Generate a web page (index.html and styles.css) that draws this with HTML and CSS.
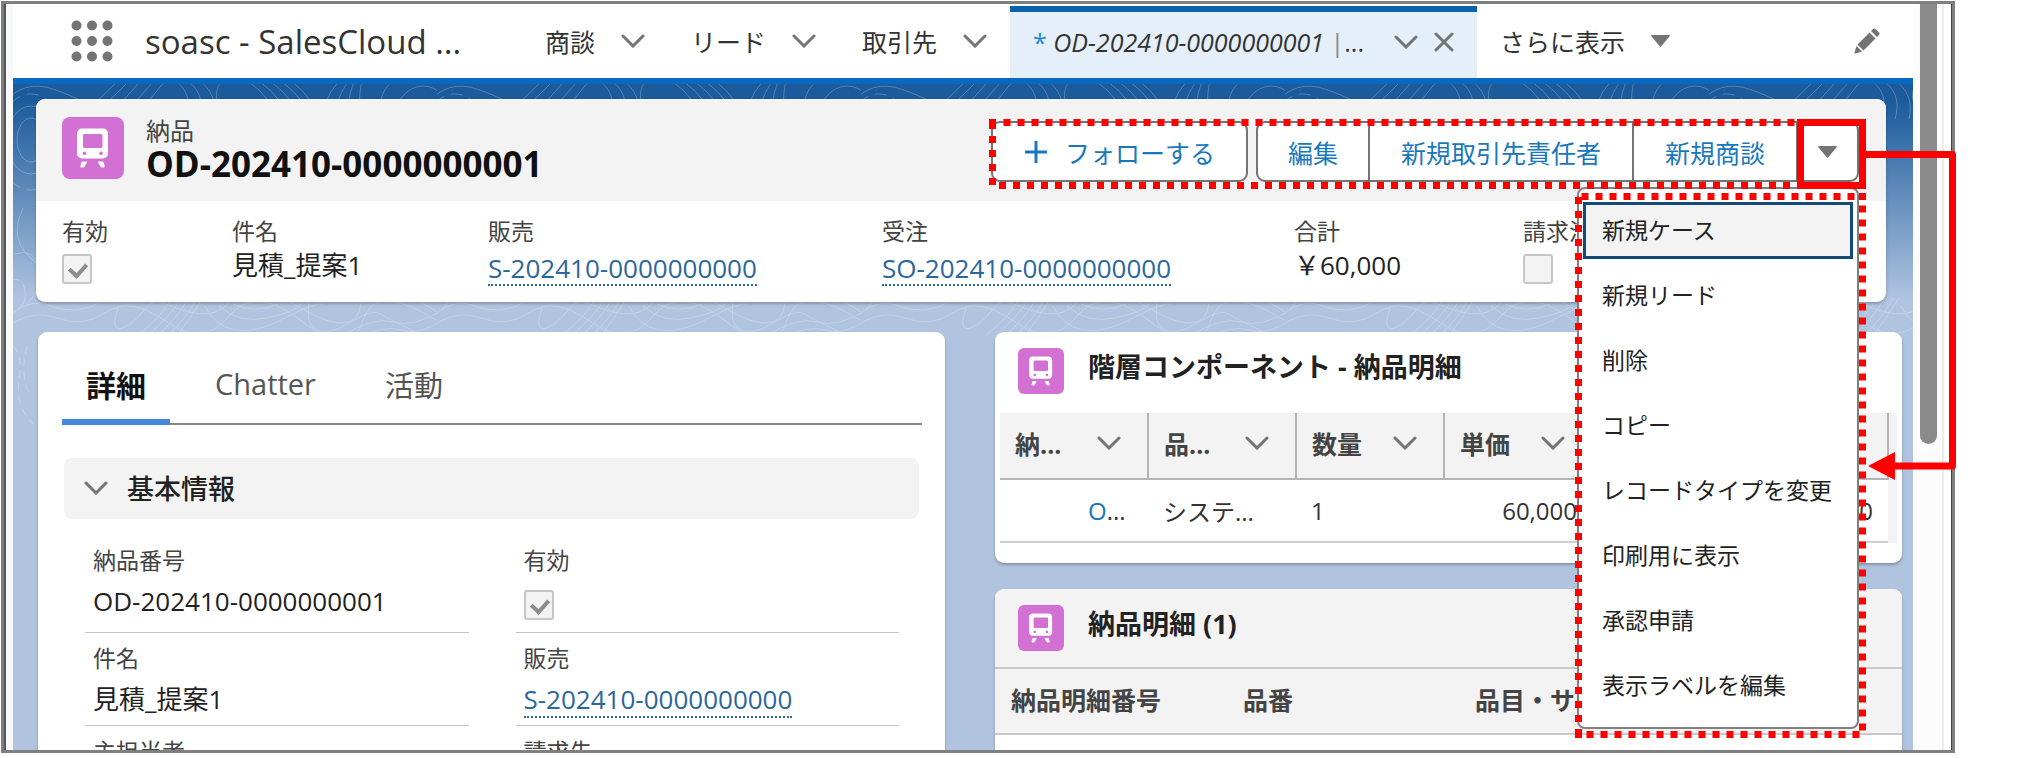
FILE: index.html
```html
<!DOCTYPE html>
<html lang="ja">
<head>
<meta charset="utf-8">
<title>OD-202410-0000000001 | 納品</title>
<link rel="stylesheet" href="styles.css">
</head>
<body>
<svg class="defs" width="0" height="0" aria-hidden="true">
  <symbol id="train" viewBox="0 0 62 62">
    <path fill="#fff" fill-rule="evenodd" d="M20 11.500h21a5 5 0 0 1 5 5v20a5 5 0 0 1-5 5H20a5 5 0 0 1-5-5v-20a5 5 0 0 1 5-5zM22.500 17a1.500 1.500 0 0 0-1.500 1.500v11a1.500 1.500 0 0 0 1.500 1.500h16.500a1.500 1.500 0 0 0 1.500-1.500v-11a1.500 1.500 0 0 0-1.500-1.500zM22.500 34.500a1.800 1.800 0 1 0 .01 0zM39 34.500a1.800 1.800 0 1 0 .01 0z"/>
    <path fill="#fff" d="M20.500 44.500h4q1 0 .5 1l-2.500 4q-.5 1-1.500 1h-1.500q-1.500 0-1.200-1.500l1-3.500q.2-1 1.200-1zM40.500 44.500h-4q-1 0-.5 1l2.500 4q.5 1 1.500 1h1.500q1.500 0 1.200-1.500l-1-3.500q-.2-1-1.200-1z"/>
  </symbol>
  <symbol id="chevron" viewBox="0 0 24 14">
    <path d="M2 2l10 10L22 2" fill="none" stroke="#747474" stroke-width="3" stroke-linecap="round"/>
  </symbol>
  <symbol id="triangle" viewBox="0 0 19 12">
    <path d="M1 0h17q1.500 0 .6 1.200L10.300 11.200q-.8 1-1.600 0L.4 1.200Q-.5 0 1 0z" fill="#747474"/>
  </symbol>
</svg>

<div class="frame">
  <div class="gutter-left"></div>
  <div class="app">
    <header class="nav">
      <button class="launcher" aria-label="アプリケーションランチャー">
        <svg width="42" height="42" viewBox="0 0 42 42" fill="#747474"><circle cx="5.500" cy="5.500" r="5"/><circle cx="21" cy="5.500" r="5"/><circle cx="36.500" cy="5.500" r="5"/><circle cx="5.500" cy="21" r="5"/><circle cx="21" cy="21" r="5"/><circle cx="36.500" cy="21" r="5"/><circle cx="5.500" cy="36.500" r="5"/><circle cx="21" cy="36.500" r="5"/><circle cx="36.500" cy="36.500" r="5"/></svg>
      </button>
      <span class="app-name">soasc - SalesCloud ...</span>
      <nav class="items">
        <div class="item"><a href="#">商談</a><button aria-label="商談リスト"><svg class="chev"><use href="#chevron"/></svg></button></div>
        <div class="item"><a href="#">リード</a><button aria-label="リードリスト"><svg class="chev"><use href="#chevron"/></svg></button></div>
        <div class="item"><a href="#">取引先</a><button aria-label="取引先リスト"><svg class="chev"><use href="#chevron"/></svg></button></div>
        <div class="item current">
          <a href="#"><span class="star">*</span> <em>OD-202410-0000000001</em> <span class="bar">|</span>...</a>
          <button aria-label="タブの操作"><svg class="chev"><use href="#chevron"/></svg></button>
          <button class="close" aria-label="閉じる"><svg width="20" height="20" viewBox="0 0 20 20"><path d="M2 2l16 16M18 2L2 18" stroke="#747474" stroke-width="3" stroke-linecap="round"/></svg></button>
        </div>
        <button class="item more">さらに表示 <svg class="tri"><use href="#triangle"/></svg></button>
      </nav>
      <button class="edit-nav" aria-label="ナビゲーションを編集">
        <svg width="26" height="26" viewBox="0 0 26 26" fill="#747474"><path d="M3.500 16.500L15.500 4.500l6 6L9.500 22.500zM17 3l2-2q1.200-1 2.400 0L25 4.600q1.200 1.200 0 2.400l-2 2zM2.500 18l5.500 5.500-6.500 2Q.2 25.800.5 24.500z"/></svg>
      </button>
    </header>

    <main class="page">
      <svg class="topo" aria-hidden="true">
        <defs>
          <pattern id="contours" width="424" height="360" patternUnits="userSpaceOnUse">
            <g fill="none" stroke="#fff" stroke-width="1">
              <path d="M-10 20Q10-5 40 5t60 30"/><path d="M75 26L110-8M87 26L121-8M100 28L132-8M112 30L145-8M125 30L156-8"/>
              <path d="M160-5q22 14 12 40M172-5q22 14 14 40M184-5q22 14 16 40M210-5q-14 16 2 40"/>
              <path d="M225-8q24 10 40 40M236-8q24 10 40 40M247-8q24 10 40 40M258-8q24 10 40 40M269-8q22 10 38 40"/>
              <path d="M310 30q4-24 22-38M322 30q4-24 18-38M334 30q2-24 10-38M346 30q0-24 4-38M372 30q-12-20 14-38"/>
              <ellipse cx="18" cy="56" rx="14" ry="22"/><ellipse cx="18" cy="56" rx="24" ry="34"/><ellipse cx="18" cy="58" rx="34" ry="48" stroke-dasharray="12 7"/>
              <ellipse cx="408" cy="40" rx="18" ry="24"/><ellipse cx="410" cy="40" rx="30" ry="38"/>
              <path d="M10 124q-14 30 6 48t20 30M2 170q18-6 24 12t-10 36M-4 196q14-4 16 10t-8 20"/>
              <ellipse cx="406" cy="160" rx="14" ry="16"/><ellipse cx="406" cy="160" rx="24" ry="28"/><ellipse cx="406" cy="162" rx="36" ry="42"/>
              <path d="M-10 238q24-26 48-16t50-4 70 4 60-6 70 8 60-4 80 10"/>
              <path d="M-10 246q28-22 54-12t50-6 60 10 62-6 74 6 60-2 80 4"/>
              <path d="M105 224q-8 24 4 20t22-18 28-8M124 252q30-24 34-38M134 252q24-20 34-38M144 252q20-18 32-38M154 252q18-16 30-38M164 252q12-16 26-38"/>
              <path d="M192 222q10 20 30 24t50-12 38-14M206 222q20 18 48 12t34-14M220 220q22 10 46 0"/>
              <path d="M296 218q-4 22 8 28t34-8 30-8 40 20M330 252q30-20 50-14t50-12M344 256q26-16 44-10t42-10"/>
              <path d="M0 262q10 8 6 34t14 44M340 262q20 40 30 50M356 256q8 26 20 34M14 262q-8 30 4 50" stroke-dasharray="8 5"/>
            </g>
          </pattern>
        </defs>
        <rect width="100%" height="100%" fill="url(#contours)"/>
      </svg>

      <section class="card highlights">
        <div class="head">
          <span class="obj-icon"><svg><use href="#train"/></svg></span>
          <div class="titles">
            <p>納品</p>
            <h1>OD-202410-0000000001</h1>
          </div>
          <div class="actions">
            <button class="btn follow"><svg width="24" height="24" viewBox="0 0 24 24"><path d="M12 1v22M1 12h22" stroke="#1878bd" stroke-width="3"/></svg>フォローする</button>
            <div class="group">
              <button class="btn">編集</button>
              <button class="btn">新規取引先責任者</button>
              <button class="btn">新規商談</button>
              <button class="btn open" aria-label="その他のアクション" aria-expanded="true"><svg class="tri"><use href="#triangle"/></svg></button>
              <ul class="menu">
                <li><a href="#" class="focus">新規ケース</a></li>
                <li><a href="#">新規リード</a></li>
                <li><a href="#">削除</a></li>
                <li><a href="#">コピー</a></li>
                <li><a href="#">レコードタイプを変更</a></li>
                <li><a href="#">印刷用に表示</a></li>
                <li><a href="#">承認申請</a></li>
                <li><a href="#">表示ラベルを編集</a></li>
              </ul>
            </div>
          </div>
        </div>
        <div class="summary">
          <div><label class="label" for="h-active">有効</label><div class="value tick"><input type="checkbox" id="h-active" checked disabled></div></div>
          <div><span class="label">件名</span><div class="value">見積_提案1</div></div>
          <div><span class="label">販売</span><div class="value link"><a href="#">S-202410-0000000000</a></div></div>
          <div><span class="label">受注</span><div class="value link"><a href="#">SO-202410-0000000000</a></div></div>
          <div><span class="label">合計</span><div class="value">￥60,000</div></div>
          <div><label class="label" for="h-billed">請求済</label><div class="value tick"><input type="checkbox" id="h-billed" disabled></div></div>
        </div>
      </section>

      <div class="columns">
        <section class="card detail">
          <div class="tabs" role="tablist">
            <button role="tab" aria-selected="true" class="on">詳細</button>
            <button role="tab">Chatter</button>
            <button role="tab">活動</button>
          </div>
          <button class="section"><svg class="chev"><use href="#chevron"/></svg>基本情報</button>
          <div class="fields">
            <div><span class="label">納品番号</span><div class="value">OD-202410-0000000001</div></div>
            <div><label class="label" for="d-active">有効</label><div class="value tick"><input type="checkbox" id="d-active" checked disabled></div></div>
            <div><span class="label">件名</span><div class="value">見積_提案1</div></div>
            <div><span class="label">販売</span><div class="value"><a href="#">S-202410-0000000000</a></div></div>
            <div><span class="label">主担当者</span></div>
            <div><span class="label">請求先</span></div>
          </div>
        </section>

        <div class="related">
          <section class="card">
            <div class="card-head"><span class="obj-icon small"><svg><use href="#train"/></svg></span><h2>階層コンポーネント - 納品明細</h2></div>
            <div class="scroller">
              <table class="tree">
                <thead><tr>
                  <th><div>納...<svg class="chev"><use href="#chevron"/></svg></div></th>
                  <th><div>品...<svg class="chev"><use href="#chevron"/></svg></div></th>
                  <th><div>数量<svg class="chev"><use href="#chevron"/></svg></div></th>
                  <th><div>単価<svg class="chev"><use href="#chevron"/></svg></div></th>
                  <th></th>
                  <th></th>
                </tr></thead>
                <tbody><tr>
                  <td class="indent"><a href="#">O</a>...</td><td>システ...</td><td>1</td><td class="num">60,000</td><td></td><td class="num">60,000</td>
                </tr></tbody>
              </table>
            </div>
          </section>
          <section class="card list">
            <div class="card-head gray"><span class="obj-icon small"><svg><use href="#train"/></svg></span><h2>納品明細 (1)</h2></div>
            <table class="lines">
              <thead><tr><th>納品明細番号</th><th>品番</th><th>品目・サービス</th><th></th></tr></thead>
              <tbody><tr><td></td><td></td><td>システム利用料金</td><td></td></tr></tbody>
            </table>
          </section>
        </div>
      </div>
    </main>
  </div>
  <div class="gutter-right"><div class="thumb"></div></div>
</div>

<svg class="callout" width="1041" height="758" viewBox="986 0 1041 758" fill="none" stroke="#fe0000" stroke-width="7" aria-hidden="true">
  <g stroke-dasharray="7 7">
    <path d="M992.500 122v64"/><path d="M1003.500 122.500H1797"/><path d="M999 185.500H1797"/>
    <path d="M1578.500 197V731"/><path d="M1581.500 196.500H1856"/><path d="M1862.500 205.500V731"/><path d="M1586.500 734.500H1860"/>
    <path d="M1859 196.500h7M1575 734.500h7M989 122.500h7"/>
  </g>
  <path d="M1800.500 122.500h62v63h-62z"/>
  <path d="M1866 154.500h86.500V466H1892" stroke-linejoin="round"/>
  <path d="M1868 466l27-14v28z" fill="#fe0000" stroke="none"/>
</svg>
</body>
</html>
```

FILE: styles.css
```css
* { box-sizing: border-box; }

body {
  margin: 0;
  background: #fff;
  color: #222;
  font-family: "Open Sans", "Noto Sans CJK JP", sans-serif;
  font-size: 24px;
  position: relative;
  overflow: hidden;
}

p, h1, h2, ul { margin: 0; padding: 0; }
ul { list-style: none; }
button { font: inherit; color: inherit; background: none; border: 0; padding: 0; }
a { color: inherit; text-decoration: none; }
svg { display: block; flex: none; }
.defs { position: absolute; }
.chev { width: 24px; height: 14px; }
.tri { width: 19px; height: 12px; }

/* Window frame */
.frame {
  display: flex;
  height: calc(100vh - 6px);
  margin: 1px 72px 5px 1px;
  border: 3px solid #7f7f7f;
  overflow: hidden;
}
.gutter-left { flex: none; width: 9px; border-left: 2px solid #555; background: #f8f9fa; }
.gutter-right { flex: none; width: 39px; padding-left: 7px; background: linear-gradient(90deg, #fcfcfc 29px, #ececec 29px, #ececec 31px, #fff 31px); border-right: 1px solid #444; }
.thumb { width: 17px; height: 440px; background: #8a8a8a; border-radius: 0 0 9px 9px; }
.app { flex: 1; min-width: 0; display: flex; flex-direction: column; }

/* Navigation */
.nav {
  flex: none;
  display: flex;
  align-items: center;
  height: 80px;
  padding: 0 33px 0 58px;
  border-bottom: 6px solid #0a68c0;
  white-space: nowrap;
}
.app-name { width: 377px; margin-left: 32px; font-size: 33px; color: #333; }
.items { display: flex; height: 74px; font-size: 25px; color: #333; }
.item { display: flex; align-items: center; gap: 26px; padding: 0 23px; }
.current {
  border-top: 6px solid #0a62ad;
  margin-top: 2px;
  padding-bottom: 6px;
  background: #e5effa;
  width: 467px;
  gap: 16px;
}
.current a { flex: 1; font-size: 25px; }
.star { color: #1e8ad0; }
.bar { color: #888; }
.edit-nav { margin-left: auto; }

/* Page background */
.page {
  flex: 1;
  position: relative;
  padding: 15px 11px 0 23px;
  background: linear-gradient(#1b5a9b 0, #1b5a9b 16px, #b0c4df 216px, #b0c4df 100%);
}
.topo { position: absolute; left: 0; top: 0; width: 100%; height: 360px; opacity: .25; }

.card { position: relative; background: #fff; border-radius: 9px; box-shadow: 0 2px 3px rgba(0, 0, 0, .25); }

/* Highlights panel */
.highlights { margin-right: 16px; z-index: 2; }
.head { display: flex; height: 102px; padding: 18px 27px 0 26px; background: #f3f3f3; border-radius: 9px 9px 0 0; }
.obj-icon { flex: none; width: 62px; height: 62px; border-radius: 8px; background: #d370d3; }
.obj-icon svg { width: 100%; height: 100%; }
.titles { margin-left: 22px; }
.titles p { font-size: 24px; line-height: 28px; color: #444; }
.titles h1 { font-size: 35px; line-height: 38px; color: #111; }
.actions { display: flex; gap: 8px; margin-left: auto; padding-top: 4px; height: 65px; }
.btn {
  display: flex;
  align-items: center;
  gap: 17px;
  padding: 0 31px;
  border: 2px solid #747474;
  background: #fff;
  font-size: 25px;
  color: #1878bd;
  white-space: nowrap;
}
.follow { border-radius: 9px; }
.group { position: relative; display: flex; }
.group .btn + .btn { border-left: 0; }
.group .btn:first-child { border-radius: 9px 0 0 9px; padding: 0 30px; }
.group .open { border-radius: 0 9px 9px 0; padding: 0 20px; }
.menu {
  position: absolute;
  z-index: 2;
  top: 66px;
  right: 0;
  width: 282px;
  padding: 9px 4px;
  border: 2px solid #808080;
  border-radius: 8px;
  background: #fff;
}
.menu li { padding: 4px 0; }
.menu a { display: block; padding: 0 19px; line-height: 57px; font-size: 23px; color: #222; white-space: nowrap; }
.menu .focus { background: #f3f3f3; box-shadow: inset 0 0 0 3px #154a77; }

.summary {
  display: grid;
  grid-template-columns: 170fr 256fr 394fr 412fr 229fr 337fr;
  padding: 13px 26px 16px;
}
.label { display: block; font-size: 23px; line-height: 34px; color: #444; }
.value { font-size: 26px; line-height: 34px; color: #222; white-space: nowrap; }
.value a { display: inline-block; line-height: 34px; border-bottom: 2px dotted #2a6a9c; color: #2b679c; }
.summary .value { height: 38px; }
.summary .link { padding-top: 3px; }
.summary .link a { line-height: 32px; }
.tick { padding-top: 6px; }
input[type="checkbox"] {
  appearance: none;
  display: block;
  width: 30px;
  height: 30px;
  margin: 0;
  border: 2px solid #c6c6c6;
  border-radius: 3px;
  background: #f3f3f3;
}
input[type="checkbox"]:checked::after {
  content: "";
  display: block;
  width: 8px;
  height: 13px;
  margin: 4px 0 0 8px;
  border: solid #8c8c8c;
  border-width: 0 4px 4px 0;
  transform: rotate(42deg);
}

/* Lower area */
.columns { display: grid; grid-template-columns: 1fr 1fr; gap: 50px; margin: 30px 0 0 2px; align-items: start; }
.columns > * { min-width: 0; }
.detail { padding: 0 23px 40px 24px; }
.tabs { display: flex; gap: 21px; height: 93px; border-bottom: 2px solid #8a8a8a; font-size: 29px; color: #555; }
.tabs button { height: 93px; padding: 16px 24px 0; border-bottom: 6px solid transparent; }
.tabs .on { border-color: #4589df; color: #111; font-size: 30px; font-weight: 700; }
.section {
  display: flex;
  align-items: center;
  gap: 19px;
  width: calc(100% - 5px);
  height: 61px;
  margin: 33px 3px 0 2px;
  padding: 0 20px 2px;
  border-radius: 8px;
  background: #f3f3f3;
  font-size: 27px;
  font-weight: 500;
}
.fields { display: grid; grid-template-columns: 1fr 1fr; grid-template-rows: 98px 93px; gap: 0 47px; margin: 16px 23px 0; }
.fields > div { padding: 8px 8px 0; border-bottom: 1px solid #c4c4c4; }
.fields .value { margin-top: 7px; }

.related { display: flex; flex-direction: column; gap: 26px; }
.card-head { display: flex; gap: 24px; height: 81px; padding: 16px 23px 0; border-radius: 9px 9px 0 0; }
.gray { height: 78px; background: #f3f3f3; }
.small { width: 46px; height: 46px; border-radius: 6px; }
.card-head h2 { font-size: 27px; line-height: 38px; color: #222; white-space: nowrap; }
.scroller { margin: 0 5px; padding-right: 8px; background: #f3f3f3; }
.related .card:first-child { padding-bottom: 20px; }
table { width: 100%; table-layout: fixed; border-collapse: collapse; color: #333; }
th { padding: 0 0 5px; text-align: left; font-size: 25px; color: #444; background: #f3f3f3; }
td { padding: 0 15px; white-space: nowrap; font-size: 24px; }
.tree th { height: 66px; border-bottom: 2px solid #b4b4b4; border-right: 2px solid #b4b4b4; }
.tree th div { display: flex; align-items: center; justify-content: space-between; padding: 0 26px 0 15px; }
.tree td { height: 63px; background: #fff; border-bottom: 2px solid #d0d0d0; }
.tree td a { color: #1878bd; }
.tree .indent { padding-left: 88px; padding-right: 0; }
.num { text-align: right; }
.list { height: 400px; }
.lines th { width: 25%; height: 66px; padding-left: 16px; border: solid #c9c9c9; border-width: 2px 0; white-space: nowrap; }
.lines td { height: 54px; padding-left: 16px; }
.lines th:nth-child(-n+3) { width: 232px; }

/* Annotations over the window */
.callout { position: absolute; top: 0; right: 0; z-index: 5; pointer-events: none; }
```
